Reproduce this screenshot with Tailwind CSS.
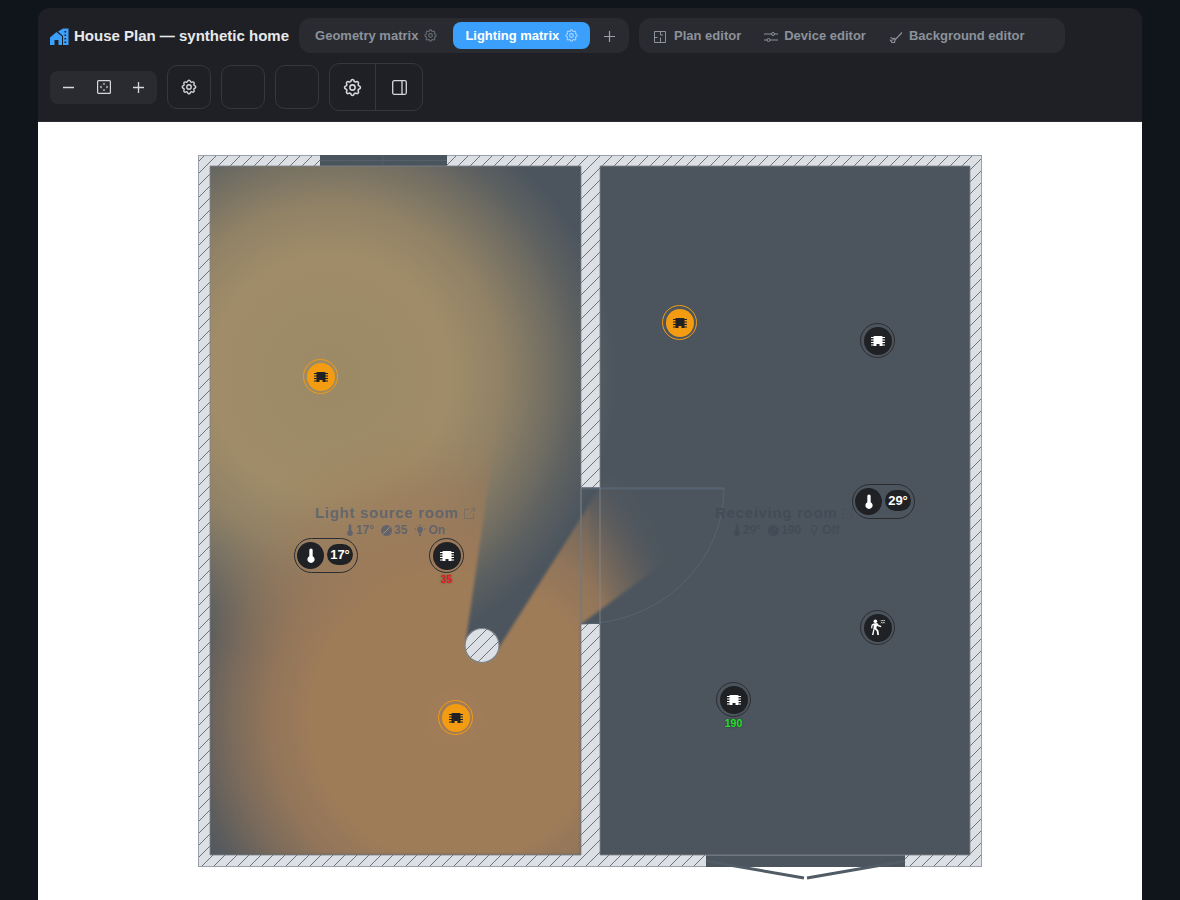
<!DOCTYPE html>
<html lang="en">
<head>
    <meta charset="UTF-8">
    <title>House Plan</title>
    <script src="https://cdn.jsdelivr.net/npm/@tailwindcss/browser@4"></script>
</head>
<body class="bg-[#10141b] h-[900px] overflow-hidden font-['Liberation_Sans',sans-serif]">
    <svg class="hidden">
        <symbol id="chip" viewBox="0 0 14 12">
            <rect x="2.5" y="1" width="9" height="10" rx=".8" fill="currentColor"/>
            <path d="M0 2.500h14M0 5h14M0 7.500h14M0 10h14" stroke="currentColor" stroke-width="1.100"/>
            <path d="M5.500 11V9h3v2z" fill="var(--slot)"/>
        </symbol>
        <symbol id="therm" viewBox="0 0 12 18">
            <path d="M4 2.500a2 2 0 0 1 4 0v7.300a4.300 4.300 0 1 1-4 0z" fill="currentColor"/>
        </symbol>
        <symbol id="gear" viewBox="0 0 24 24">
            <path fill="none" stroke="currentColor" stroke-width="1.800" stroke-linejoin="round" d="M10.300 4.300c.4-1.800 3-1.800 3.400 0a1.700 1.700 0 0 0 2.600 1.100c1.500-.9 3.300.8 2.400 2.400a1.700 1.700 0 0 0 1 2.500c1.800.4 1.800 3 0 3.400a1.700 1.700 0 0 0-1 2.600c.9 1.500-.9 3.300-2.400 2.400a1.700 1.700 0 0 0-2.600 1c-.4 1.800-3 1.800-3.400 0a1.700 1.700 0 0 0-2.600-1c-1.500.9-3.300-.9-2.400-2.400a1.700 1.700 0 0 0-1-2.600c-1.800-.4-1.800-3 0-3.400a1.700 1.700 0 0 0 1-2.500c-.9-1.600.9-3.300 2.400-2.400a1.700 1.700 0 0 0 2.600-1.100z"/>
            <circle cx="12" cy="12" r="3" fill="none" stroke="currentColor" stroke-width="1.800"/>
        </symbol>
        <symbol id="ext" viewBox="0 0 12 12">
            <path fill="none" stroke="currentColor" stroke-width="1" d="M6 1.500H.5V11.500H10.500V6M5 7L11.500.5M8 .5h3.500V4"/>
        </symbol>
    </svg>

    <div class="mx-[38px] mt-2 h-[892px] flex flex-col">
        <!-- Header -->
        <header class="h-[114px] shrink-0 bg-[#1f2025] rounded-t-xl px-3 pt-2.5 flex flex-col gap-2.5 border-b border-[#2c2d33]">
            <div class="flex items-center h-[35px]">
                <svg class="w-[19px] h-[17px] mt-0.5 text-[#3b9ffc]" viewBox="0 0 19 17" fill="currentColor">
                    <path d="M0 9.500L6.500 4 12 8.500V17H8.500v-5h-4v5H0z"/>
                    <path d="M8 3.500l5-3h5.500V17H13V8z"/>
                    <path d="M14.500 3h1.600v1.600h-1.600zM14.500 6.500h1.600v1.600h-1.600zM14.500 10h1.600v1.600h-1.600zM14.500 13.500h1.600v1.600h-1.600z" fill="#1f2025"/>
                </svg>
                <h1 class="ml-[5px] mt-0.5 text-[15px] font-bold text-[#e8e9eb] whitespace-nowrap">House Plan — synthetic home</h1>

                <div class="ml-2.5 h-[35px] w-[330px] bg-[#2a2b30] rounded-xl flex items-center pl-4 text-[13px] font-bold">
                    <span class="text-[#8b929b]">Geometry matrix</span>
                    <svg class="w-[15px] h-[15px] ml-[5px] text-[#666c74]"><use href="#gear"/></svg>
                    <div class="ml-[15px] h-[27px] w-[137px] bg-[#3b9ffc] rounded-lg flex items-center pl-3 text-white">
                        Lighting matrix
                        <svg class="w-[15px] h-[15px] ml-[5px] text-[#a8d5ff]"><use href="#gear"/></svg>
                    </div>
                    <svg class="w-[11px] h-[11px] ml-3.5 mt-0.5 text-[#9aa0a8]" viewBox="0 0 11 11"><path d="M5.500 0v11M0 5.500h11" stroke="currentColor" stroke-width="1.200"/></svg>
                </div>

                <div class="ml-2.5 h-[35px] w-[426px] bg-[#2a2b30] rounded-xl flex items-center pl-[15px] text-[13px] font-bold text-[#8b929b]">
                    <svg class="w-3 h-3 mt-0.5" viewBox="0 0 12 12" fill="none" stroke="currentColor"><path d="M.5.500h11v11H.5zM.5 6.500h3M6.500.500v3.500H9M6.500 6.500v5"/></svg>
                    <span class="ml-2">Plan editor</span>
                    <svg class="w-[14px] h-3 ml-[23px] mt-0.5" viewBox="0 0 14 12" fill="none" stroke="currentColor"><path d="M0 3h7.500M10.500 3H14M0 9h3M6 9h8"/><circle cx="9" cy="3" r="1.500"/><circle cx="4.500" cy="9" r="1.500"/></svg>
                    <span class="ml-1.5">Device editor</span>
                    <svg class="w-[14px] h-3 ml-[23px] mt-0.5" viewBox="0 0 14 12" fill="none" stroke="currentColor" stroke-width="1.200"><path d="M5 7l1.500 1.500L13 1.500"/><path d="M1.500 6.500l3.500 1.500-1.500 1-2 .2L3 11.500h2.500L6 9"/></svg>
                    <span class="ml-1.5">Background editor</span>
                </div>
            </div>

            <div class="flex items-center h-12 text-[#d6d8db]">
                <div class="w-[107px] h-[33px] bg-[#2a2b30] rounded-lg flex items-center justify-between px-[13px]">
                    <svg class="w-[11px] h-[11px]" viewBox="0 0 11 11"><path d="M0 5.500h11" stroke="currentColor" stroke-width="1.500"/></svg>
                    <svg class="w-[14px] h-[14px]" viewBox="0 0 14 14" fill="none" stroke="currentColor" stroke-width="1.200"><rect x=".6" y=".6" width="12.800" height="12.800" rx="1"/><path d="M7 2.800l1.400 1.800H5.600zM7 11.200L5.600 9.400h2.800zM2.800 7l1.800-1.400v2.800zM11.200 7L9.400 8.400V5.600z" fill="currentColor" stroke="none"/></svg>
                    <svg class="w-[11px] h-[11px]" viewBox="0 0 11 11"><path d="M0 5.500h11M5.500 0v11" stroke="currentColor" stroke-width="1.300"/></svg>
                </div>
                <button class="ml-2.5 w-11 h-11 border border-[#36373d] rounded-[10px] flex items-center justify-center">
                    <svg class="w-[18px] h-[18px]"><use href="#gear"/></svg>
                </button>
                <button class="ml-2.5 w-11 h-11 border border-[#36373d] rounded-[10px]"></button>
                <button class="ml-2.5 w-11 h-11 border border-[#36373d] rounded-[10px]"></button>
                <div class="ml-2.5 w-[94px] h-12 border border-[#36373d] rounded-[10px] flex">
                    <div class="w-[46px] border-r border-[#36373d] flex items-center justify-center">
                        <svg class="w-[21px] h-[21px]"><use href="#gear"/></svg>
                    </div>
                    <div class="flex-1 flex items-center justify-center">
                        <svg class="w-[15px] h-[15px]" viewBox="0 0 15 15" fill="none" stroke="currentColor" stroke-width="1.300"><rect x=".7" y=".7" width="13.600" height="13.600" rx="1.500"/><path d="M10 .7v13.600"/></svg>
                    </div>
                </div>
            </div>
        </header>

        <!-- Plan canvas: free-form drawing in page coordinates -->
        <main class="relative flex-1 bg-white overflow-hidden">
            <svg class="absolute inset-0" width="1104" height="778" viewBox="38 122 1104 778">
                <defs>
                    <pattern id="hatch" patternUnits="userSpaceOnUse" width="12" height="12">
                        <rect width="12" height="12" fill="#dcdfe3"/>
                        <path d="M-3 3L3 -3M0 12L12 0M9 15L15 9" stroke="#60666e" stroke-width=".9"/>
                    </pattern>
                    <radialGradient id="lampA" gradientUnits="userSpaceOnUse" cx="330" cy="376" r="285">
                        <stop offset="0" stop-color="#9c8966"/>
                        <stop offset=".42" stop-color="#a08c68"/>
                        <stop offset=".6" stop-color="#a08c68" stop-opacity=".82"/>
                        <stop offset=".76" stop-color="#a08c68" stop-opacity=".48"/>
                        <stop offset=".89" stop-color="#a08c68" stop-opacity=".18"/>
                        <stop offset="1" stop-color="#a08c68" stop-opacity="0"/>
                    </radialGradient>
                    <radialGradient id="lampB" gradientUnits="userSpaceOnUse" cx="455" cy="717" r="290">
                        <stop offset="0" stop-color="#a07b59"/>
                        <stop offset=".5" stop-color="#9e7b59"/>
                        <stop offset=".64" stop-color="#9e7b59" stop-opacity=".85"/>
                        <stop offset=".78" stop-color="#9e7b59" stop-opacity=".55"/>
                        <stop offset=".9" stop-color="#9e7b59" stop-opacity=".2"/>
                        <stop offset="1" stop-color="#9e7b59" stop-opacity="0"/>
                    </radialGradient>
                    <linearGradient id="beamFade" gradientUnits="userSpaceOnUse" x1="590" y1="570" x2="668" y2="550">
                        <stop offset="0" stop-color="#4c555e" stop-opacity="0"/>
                        <stop offset="1" stop-color="#4c555e"/>
                    </linearGradient>
                    <filter id="soft" x="-5%" y="-5%" width="110%" height="110%"><feGaussianBlur stdDeviation="1.500"/></filter>
                    <clipPath id="lit">
                        <rect x="210" y="166" width="371" height="689"/>
                        <rect x="581" y="488" width="19" height="136"/>
                        <rect x="600" y="166" width="370" height="689"/>
                    </clipPath>
                    <clipPath id="shadowB">
                        <path d="M210 166H534L466 640 498 649 600 488 700 330V536L581 624V855H210z"/>
                    </clipPath>
                </defs>

                <!-- walls -->
                <rect x="198.500" y="155.500" width="783" height="711" fill="url(#hatch)" stroke="#9aa0a8"/>
                <rect x="763.500" y="268.500" width="13" height="431" fill="url(#hatch)" stroke="#9aa0a8"/>

                <!-- rooms -->
                <rect x="210" y="166" width="371" height="689" fill="#4c555e"/>
                <rect x="600" y="166" width="370" height="689" fill="#4c555e"/>
                <rect x="581" y="488" width="19" height="136" fill="#4c555e"/>

                <!-- doors in the outer wall -->
                <rect x="320" y="155" width="127" height="11" fill="#4a545d"/>
                <path d="M320 160.500h127" stroke="#566069"/>
                <path d="M383 155v11" stroke="#5a646d" stroke-width=".7"/>
                <rect x="706" y="855" width="199" height="12" fill="#4c555e"/>
                <path d="M706 855.500h199" stroke="#666e76"/>

                <!-- light -->
                <g clip-path="url(#lit)">
                    <circle cx="330" cy="376" r="285" fill="url(#lampA)"/>
                    <g filter="url(#soft)">
                        <g clip-path="url(#shadowB)">
                            <circle cx="455" cy="717" r="290" fill="url(#lampB)"/>
                        </g>
                    </g>
                    <!-- the beam dies out sooner past the door -->
                    <rect x="590" y="470" width="120" height="170" fill="url(#beamFade)"/>
                </g>

                <!-- door swing -->
                <path d="M581 488H724A143 136 0 0 1 581 624z" fill="none" stroke="#566371" stroke-width="1"/>
                <path d="M581 488.500H724" stroke="#566371" stroke-width="2"/>
                <path d="M581 488V624M600 488V624" stroke="#8b9095" stroke-opacity=".7"/>

                <!-- outlines of the rooms -->
                <path d="M581 488V166H210V855H581V624" fill="none" stroke="#7d848c" stroke-width=".8"/>
                <path d="M600 488V166H970V855H600V624" fill="none" stroke="#7d848c" stroke-width=".8"/>

                <!-- pillar -->
                <circle cx="482" cy="645.500" r="17" fill="url(#hatch)" stroke="#7c838b" stroke-width="1.200"/>

                <!-- bottom double door leaves -->
                <path d="M706 861L804 878M905 861L807 878" stroke="#505b66" stroke-width="3"/>
            </svg>

            <!-- Room labels -->
            <div class="absolute left-[277px] top-[381px] w-[161px] text-[#4a5a70]/70 whitespace-nowrap">
                <div class="flex items-center gap-[5px] text-[15px] font-bold tracking-[0.7px] leading-5">Light source room
                    <svg class="w-[11px] h-[11px] shrink-0 opacity-60"><use href="#ext"/></svg></div>
                <div class="flex items-center justify-center gap-[7px] text-[12px] font-bold leading-4 -mt-px">
                    <span class="flex items-center gap-0.5"><svg class="w-2 h-3"><use href="#therm"/></svg>17°</span>
                    <span class="flex items-center gap-0.5"><svg class="w-[11px] h-[11px]" viewBox="0 0 11 11"><circle cx="5.500" cy="5.500" r="5.500" fill="currentColor"/><path d="M2 9L9 2" stroke="#a48e6e" stroke-width="1"/></svg>35</span>
                    <span class="flex items-center gap-0.5"><svg class="w-3 h-3" viewBox="0 0 12 12" fill="currentColor"><path d="M6 2.500a3 3 0 0 0-1.600 5.500v1.500h3.200V8A3 3 0 0 0 6 2.500zM5 10.300h2V12H5z"/><path d="M6 0v1.500M.5 5H2M10 5h1.500M2 1.500l1 1M10 1.500l-1 1" stroke="currentColor"/></svg>On</span>
                </div>
            </div>
            <div class="absolute left-[677px] top-[381px] w-[161px] text-[#424c57] whitespace-nowrap">
                <div class="flex items-center gap-[5px] text-[15px] font-bold tracking-[0.7px] leading-5">Receiving room
                    <svg class="w-[11px] h-[11px] shrink-0 opacity-60"><use href="#ext"/></svg></div>
                <div class="flex items-center pl-[18px] gap-[7px] text-[12px] font-bold leading-4 -mt-px">
                    <span class="flex items-center gap-0.5"><svg class="w-2 h-3"><use href="#therm"/></svg>29°</span>
                    <span class="flex items-center gap-0.5"><svg class="w-[11px] h-[11px]" viewBox="0 0 11 11"><circle cx="5.500" cy="5.500" r="5.500" fill="currentColor"/><path d="M2 9L9 2" stroke="#4c555e" stroke-width="1"/></svg>190</span>
                    <span class="flex items-center gap-0.5"><svg class="w-3 h-3" viewBox="0 0 12 12" fill="none" stroke="currentColor"><path d="M6 1.500a3 3 0 0 0-1.600 5.500v2h3.200V7A3 3 0 0 0 6 1.500zM5 11h2"/></svg>Off</span>
                </div>
            </div>

            <!-- Orange lamps -->
            <div class="absolute left-[265px] top-[237px] w-[35px] h-[35px] rounded-full border border-[#f39c12] flex items-center justify-center">
                <div class="w-[28px] h-[28px] rounded-full bg-[#f39c12] text-[#202124] [--slot:#f39c12] flex items-center justify-center"><svg class="w-3.5 h-3"><use href="#chip"/></svg></div>
            </div>
            <div class="absolute left-[400px] top-[578px] w-[35px] h-[35px] rounded-full border border-[#f39c12] flex items-center justify-center">
                <div class="w-[28px] h-[28px] rounded-full bg-[#f39c12] text-[#202124] [--slot:#f39c12] flex items-center justify-center"><svg class="w-3.5 h-3"><use href="#chip"/></svg></div>
            </div>
            <div class="absolute left-[624px] top-[183px] w-[35px] h-[35px] rounded-full border border-[#f39c12] flex items-center justify-center">
                <div class="w-[28px] h-[28px] rounded-full bg-[#f39c12] text-[#202124] [--slot:#f39c12] flex items-center justify-center"><svg class="w-3.5 h-3"><use href="#chip"/></svg></div>
            </div>

            <!-- Dark lamps -->
            <div class="absolute left-[391px] top-[416px] w-[35px] h-[35px] rounded-full border border-[#2b2c30] flex items-center justify-center">
                <div class="w-[28px] h-[28px] rounded-full bg-[#202124] text-white [--slot:#202124] flex items-center justify-center"><svg class="w-3.5 h-3"><use href="#chip"/></svg></div>
            </div>
            <span class="absolute left-[391px] top-[451px] w-[35px] text-center text-[10.500px] leading-3 font-bold text-[#ee1c1e] [text-shadow:0_0_2px_#444]">35</span>

            <div class="absolute left-[822px] top-[201px] w-[35px] h-[35px] rounded-full border border-[#2b2c30] flex items-center justify-center">
                <div class="w-[28px] h-[28px] rounded-full bg-[#202124] text-white [--slot:#202124] flex items-center justify-center"><svg class="w-3.5 h-3"><use href="#chip"/></svg></div>
            </div>

            <div class="absolute left-[678px] top-[560px] w-[35px] h-[35px] rounded-full border border-[#2b2c30] flex items-center justify-center">
                <div class="w-[28px] h-[28px] rounded-full bg-[#202124] text-white [--slot:#202124] flex items-center justify-center"><svg class="w-3.5 h-3"><use href="#chip"/></svg></div>
            </div>
            <span class="absolute left-[678px] top-[595px] w-[35px] text-center text-[10.500px] leading-3 font-bold text-[#22e02a] [text-shadow:0_0_2px_#222]">190</span>

            <!-- Motion sensor -->
            <div class="absolute left-[822px] top-[488px] w-[35px] h-[35px] rounded-full border border-[#2b2c30] flex items-center justify-center">
                <div class="w-[28px] h-[28px] rounded-full bg-[#202124] text-white flex items-center justify-center">
                    <svg class="w-[17px] h-[17px]" viewBox="0 0 16 16" fill="currentColor">
                        <circle cx="6" cy="2.200" r="1.700"/>
                        <path d="M4.200 4.200l3.500-.5 1.500 2 2.500.8-.4 1.200-3.100-.9-.7-.8-.6 2.800 2 2 .5 4.200H7.800l-.6-3.600-2-1.700-1 5.300H2.800L4.200 9l.3-3.400-1.100.8-.4 2.500-1.100-.2.500-3.300z"/>
                        <path d="M11 1l1 1 1-1 1 1 1-1M11 4l1-1 1 1 1-1 1 1" fill="none" stroke="currentColor" stroke-width=".7"/>
                    </svg>
                </div>
            </div>

            <!-- Thermostats -->
            <div class="absolute left-[256px] top-[416px] w-[64px] h-[35px] rounded-full border border-[#2b2c30] flex items-center pl-[2px]">
                <div class="w-[27px] h-[27px] rounded-full bg-[#202124] text-white flex items-center justify-center"><svg class="w-[10px] h-[15px]"><use href="#therm"/></svg></div>
                <div class="ml-[3px] w-[26px] h-[21px] rounded-full bg-[#202124] text-white text-[13px] font-bold flex items-center justify-center -mt-0.5">17°</div>
            </div>
            <div class="absolute left-[814px] top-[362px] w-[63px] h-[35px] rounded-full border border-[#2b2c30] flex items-center pl-[2px]">
                <div class="w-[27px] h-[27px] rounded-full bg-[#202124] text-white flex items-center justify-center"><svg class="w-[10px] h-[15px]"><use href="#therm"/></svg></div>
                <div class="ml-[3px] w-[26px] h-[21px] rounded-full bg-[#202124] text-white text-[13px] font-bold flex items-center justify-center -mt-0.5">29°</div>
            </div>
        </main>
    </div>
</body>
</html>
